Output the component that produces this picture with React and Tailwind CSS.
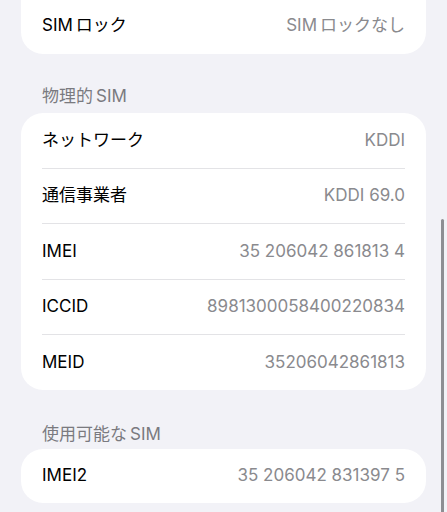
import React from "react";

const font = { fontFamily: 'Inter, "Noto Sans CJK JP", "Noto Sans", sans-serif' };

function Row({ label, value, last }) {
  return (
    <div className="flex flex-col">
      <div className="flex h-[54.6px] items-center justify-between">
        <span className="text-[17px] text-black">{label}</span>
        <span className="text-[17px] text-[#8a8a8e]">{value}</span>
      </div>
      {!last && <div className="h-px bg-[#e3e3e6]" />}
    </div>
  );
}

export default function App() {
  const physical = [
    ["ネットワーク", "KDDI"],
    ["通信事業者", "KDDI 69.0"],
    ["IMEI", "35 206042 861813 4"],
    ["ICCID", "8981300058400220834"],
    ["MEID", "35206042861813"],
  ];
  return (
    <div className="relative h-[512px] w-full overflow-hidden bg-[#f2f2f7]" style={font}>
      <div className="mx-[21px] flex h-[54px] items-center justify-between rounded-b-[22px] bg-white px-[21px] pb-[2px]">
        <span className="text-[17px] text-black">SIM<span className="ml-[3px]">ロック</span></span>
        <span className="text-[17px] text-[#8a8a8e]">SIM<span className="ml-[3px]">ロックなし</span></span>
      </div>

      <div className="px-[42px] pt-[31px] pb-[6px] text-[17px] leading-[22px] text-[#7a7a7f]">
        物理的<span className="ml-[3px]">SIM</span>
      </div>

      <div className="mx-[21px] rounded-[22px] bg-white px-[21px]">
        {physical.map(([l, v], i) => (
          <Row key={l} label={l} value={v} last={i === physical.length - 1} />
        ))}
      </div>

      <div className="px-[42px] pt-[33px] pb-[4px] text-[17px] leading-[22px] text-[#7a7a7f]">
        使用可能な<span className="ml-[3px]">SIM</span>
      </div>

      <div className="mx-[21px] flex h-[54px] items-center justify-between rounded-[22px] bg-white px-[21px]">
        <span className="text-[17px] text-black">IMEI2</span>
        <span className="text-[17px] text-[#8a8a8e]">35 206042 831397 5</span>
      </div>

      <div className="absolute left-[440.5px] top-[219px] h-[310px] w-[3px] rounded-full bg-[#8e8e93]" />
    </div>
  );
}
